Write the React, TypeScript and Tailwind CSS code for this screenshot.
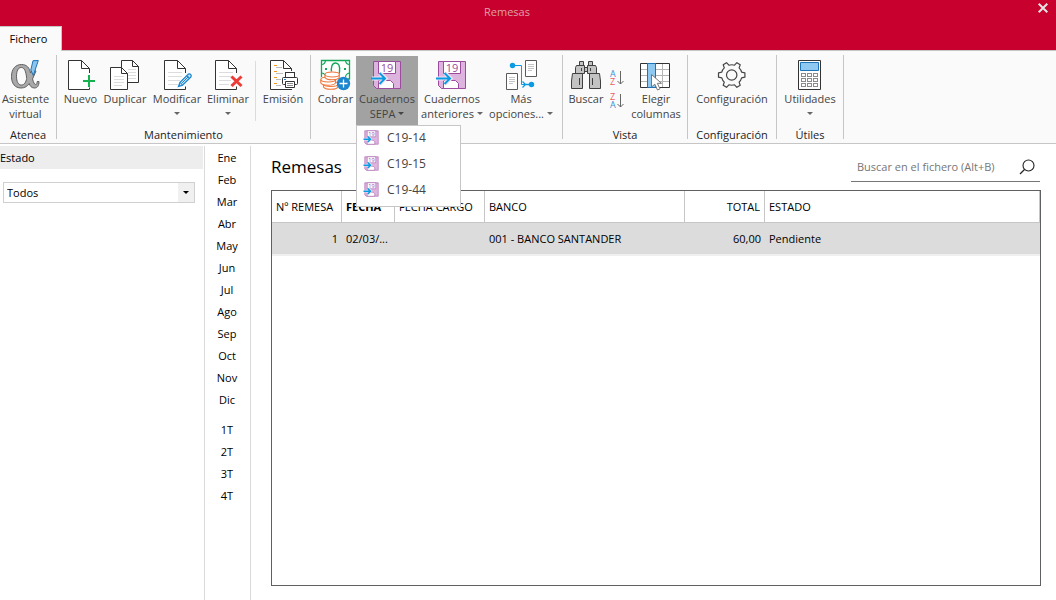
import { useState, type ReactNode } from "react";

const DOC = "#333333";
const BLUE = "#1e88cf";
const SKY = "#0a9be3";
const PURPLE = "#9b4c9e";
const GRAY = "#5a5a5a";

function Icon({ children }: { children: ReactNode }) {
  return (
    <svg viewBox="0 0 32 32" className="block size-8 shrink-0" fill="none" aria-hidden="true">
      {children}
    </svg>
  );
}

function Sheet({ lines = false }: { lines?: boolean }) {
  return (
    <>
      <path d="M24.500 14V9.500L16.500 1.500H3.500V30.500H24.500V27.500" fill="#fff" stroke={DOC} />
      <path d="M16.500 1.500V9.500H24.500" stroke={DOC} />
      {lines && <path d="M7 13.500H21M7 17.500H21M7 21.500H19M7 25.500H17" stroke="#dcdcdc" />}
    </>
  );
}

function AteneaIcon() {
  return (
    <Icon>
      <path
        d="M11.500 5.500C17 5.500 19.500 9 20.500 14L22 10.500L26 12L22.500 20C23.500 23.500 24.500 25.500 25.700 25.500C26.700 25.500 27 24.500 27.200 22.500H29C29 26.500 27.500 29 24.500 29C21.500 29 20 27 19.200 24.500C17.200 27.500 14.500 29 11 29C5 29 1.500 24.500 1.500 17.500C1.500 10 5.500 5.500 11.500 5.500Z"
        fill="#a9a9a9"
        stroke="#606060"
      />
      <path
        d="M11.300 8.500C8 8.500 6.500 12 6.500 17.300C6.500 22.800 8.300 26 11.500 26C14.500 26 16 23 16.700 19.500C16 12.500 14.500 8.500 11.300 8.500Z"
        fill="#fafafa"
        stroke="#606060"
      />
      <path d="M23 1.700L28.300 1.500L23.300 16.500L20.800 11Z" fill="#8cc4ec" stroke="#1f73b7" />
    </Icon>
  );
}

function NewIcon() {
  return (
    <Icon>
      <Sheet />
      <path d="M24 15.500V28.500M17.500 22H30.500" stroke="#fafafa" strokeWidth="4" />
      <path d="M24 16V28M18 22H30" stroke="#16b14f" strokeWidth="2" />
    </Icon>
  );
}

function DuplicateIcon() {
  return (
    <Icon>
      <path d="M12.500 23.500V1.500H23.500L29.500 7.500V23.500Z" fill="#fff" stroke={DOC} />
      <path d="M23.500 1.500V7.500H29.500" stroke={DOC} />
      <path d="M19 10.500H27M19 13.500H27M19 16.500H27M19 19.500H27" stroke="#dcdcdc" />
      <path d="M1.500 30.500V8.500H12.500L18.500 14.500V30.500Z" fill="#fff" stroke={DOC} />
      <path d="M12.500 8.500V14.500H18.500" stroke={DOC} />
      <path d="M5 17.500H15M5 20.500H15M5 23.500H15M5 26.500H13" stroke="#dcdcdc" />
    </Icon>
  );
}

function EditIcon() {
  return (
    <Icon>
      <Sheet lines />
      <path d="M17.500 27.500L19 23.300L27.300 15.200Q28.700 14.500 29.800 15.600Q30.700 16.800 29.800 18L21.500 26.200Z" fill="#cfe6f6" stroke={BLUE} strokeWidth="1.300" />
      <path d="M19 23.300L21.500 26.200M25.800 16.700L28.300 19.300M20.500 24.500L27.500 17.500" stroke={BLUE} />
      <path d="M17.500 27.500L18.300 25.300L19.600 26.600Z" fill={BLUE} />
    </Icon>
  );
}

function DeleteIcon() {
  return (
    <Icon>
      <Sheet lines />
      <path d="M19.500 17.500L29 27M29 17.500L19.500 27" stroke="#fafafa" strokeWidth="5" />
      <path d="M19.500 17.500L29.500 27M29.500 17.500L19.500 27" stroke="#ee3b36" strokeWidth="3" />
    </Icon>
  );
}

function PrintIcon() {
  return (
    <Icon>
      <path d="M24.500 12V9.500L16.500 1.500H3.500V30.500H25" fill="#fff" stroke={DOC} />
      <path d="M16.500 1.500V9.500H24.500" stroke={DOC} />
      <path d="M7 6.500H10M7 12.500H10M7 18.500H10M7 24.500H10" stroke="#f39a1e" />
      <path d="M9 8.500H15M9 14.500H16M9 20.500H14M9 26.500H14" stroke="#bdbdbd" />
      <rect x="18.500" y="13.500" width="9" height="6" fill="#fff" stroke={DOC} />
      <rect x="15.500" y="18.500" width="15" height="7" rx="1" fill="#fff" stroke={DOC} />
      <rect x="17" y="20" width="2" height="1" fill={BLUE} />
      <path d="M18.500 22.500H27.500V28.500H18.500Z" fill="#fff" stroke={DOC} />
      <path d="M20 24.500H26M20 26.500H26" stroke="#8a8a8a" />
    </Icon>
  );
}

function CollectIcon() {
  return (
    <Icon>
      <path d="M1.500 1.500H29.500V20H1.500Z" fill="#fff" stroke="#12a85a" strokeWidth="1.300" />
      <path d="M1.500 5.500Q5 5.500 5.500 1.500M25.500 1.500Q26 5.500 29.500 5.500M1.500 14Q4 14 5 16M29.500 14Q26 14.500 25.500 18" stroke="#12a85a" strokeWidth="1.200" />
      <path d="M5 9H7V11H5ZM24 9H26V11H24Z" fill="#12a85a" />
      <path d="M11.500 14Q10.500 4 15.500 4Q20.500 4 19.500 13Q19.300 15 18 16" stroke="#12a85a" strokeWidth="1.400" />
      <path d="M0 21Q0 17.500 5 17V15Q7 12.500 12 12.500Q19 13 19.500 16V28Q16 32 8 31Q1 30.500 0 28Z" fill="#fafafa" />
      <g fill="#fff" stroke="#f0783c" strokeWidth="1.100">
        <path d="M3.500 25V28C5 31 16.500 31 18 28V25" />
        <ellipse cx="10.800" cy="25" rx="7.300" ry="2.500" />
        <path d="M0.800 20.500V24C2.500 27 13.500 27 15.500 24V20.500" />
        <ellipse cx="8.200" cy="20.500" rx="7.300" ry="2.500" />
        <path d="M5 15.500V18.500C6.500 21.500 17.500 21.500 19.300 18.500V15.500" />
        <ellipse cx="12.200" cy="15.500" rx="7.200" ry="2.500" />
      </g>
      <circle cx="23.500" cy="24.500" r="6.700" fill="#1c86cf" />
      <path d="M23.500 20.500V28.500M19.500 24.500H27.500" stroke="#fff" strokeWidth="1.300" />
    </Icon>
  );
}

function NotebookArt({ arrow = 2 }: { arrow?: number }) {
  return (
    <>
      <path d="M2.500 2.500H29.500V29.500H5.500L2.500 26.500Z" fill="#dcb4de" stroke={PURPLE} />
      <path d="M7.500 2.500H24.500V14.500H7.500Z" fill="#fff" stroke={PURPLE} />
      <path d="M7.500 29.500V21.500H19.500L22.500 24.500V29.500Z" fill="#fff" stroke={PURPLE} />
      <path d="M1 19.500H14M9 14L14.500 19.500L9 25" stroke="#f3e4f4" strokeWidth={arrow + 2} />
      <path d="M0 19.500H13.500M8.500 14L14 19.500L8.500 25" stroke={SKY} strokeWidth={arrow} />
      <text x="16" y="12.500" textAnchor="middle" fontSize="11" fontFamily="Open Sans, sans-serif" fill={PURPLE}>19</text>
    </>
  );
}

function NotebookIcon() {
  return (
    <Icon>
      <NotebookArt />
    </Icon>
  );
}

function MoreIcon() {
  return (
    <Icon>
      <path d="M7.500 6.500H16.500V25.500H20" stroke={SKY} />
      <path d="M17.500 22.500L20.500 25.500L17.500 28.500M20 25.500H26" stroke={SKY} strokeWidth="1.300" />
      <circle cx="7.500" cy="6.500" r="2.700" fill={SKY} />
      <circle cx="26.500" cy="25.500" r="2.700" fill={SKY} />
      <path d="M20.500 1.500H31.500V17.500H20.500ZM1.500 14.500H12.500V30.500H1.500Z" fill="#fff" stroke={GRAY} />
      <path d="M23 5.500H29M23 7.500H29M23 9.500H29M23 11.500H27M4 18.500H10M4 20.500H10M4 22.500H10M4 24.500H8" stroke="#c4c4c4" />
    </Icon>
  );
}

function BinocularsIcon() {
  return (
    <Icon>
      <g fill="#c3c3c3" stroke="#404040">
        <path d="M14.500 8.500H17.500V12.500H14.500Z" />
        <path d="M9.500 2.500H13.500V6.500H9.500ZM18.500 2.500H22.500V6.500H18.500Z" />
        <path d="M6.500 6.500H14.500V14.500H5.500V8.500ZM17.500 6.500H25.500L26.500 8.500V14.500H17.500Z" />
        <path d="M2.500 14.500H12.500V29.500H1.500V22ZM19.500 14.500H29.500L30.500 22V29.500H19.500Z" />
      </g>
      <path d="M9.500 19V26M22.500 19V26M11.500 9V12M20.500 9V12" stroke="#404040" />
    </Icon>
  );
}

function ColumnsIcon() {
  return (
    <Icon>
      <path d="M0.500 4.500H29.500V28.500H0.500Z" fill="#fff" />
      <path d="M1 10.500H29M1 16.500H29M1 22.500H29M22.500 5V28" stroke="#b5b5b5" />
      <path d="M0.500 4.500H29.500V28.500H0.500Z" stroke="#333" />
      <path d="M7.500 4.500H15.500V28.500H7.500Z" fill="#8fc8f0" stroke="#1f73b7" />
      <path d="M11.500 15.500V28L14.800 25.200L17.500 31L20 29.800L17.300 24.300H21.500Z" fill="#fff" stroke="#777" />
    </Icon>
  );
}

function GearIcon() {
  return (
    <Icon>
      <path
        d="M2.500 13.800L5.800 13.200Q6.500 10.500 8.300 8.900L7.200 5.800L10.500 3.700L12.900 6.200Q15.700 5.300 18.500 6.200L20.900 3.700L24.200 5.800L23.100 8.900Q24.900 10.500 25.600 13.200L28.900 13.800V18.200L25.600 18.800Q24.900 21.500 23.100 23.100L24.200 26.200L20.900 28.300L18.500 25.800Q15.700 26.700 12.900 25.800L10.500 28.300L7.200 26.200L8.300 23.100Q6.500 21.500 5.800 18.800L2.500 18.200Z"
        stroke="#444"
        strokeWidth="1.200"
        strokeLinejoin="round"
      />
      <circle cx="15.700" cy="16" r="5.200" stroke="#444" strokeWidth="1.200" />
    </Icon>
  );
}

function CalculatorIcon() {
  return (
    <Icon>
      <path d="M4.500 1.500H26.500V30.500H4.500Z" fill="#fff" stroke="#333" />
      <path d="M6.500 3.500H24.500V11.500H6.500Z" fill="#8fc8f0" stroke="#1f73b7" />
      {[14.5, 19.5, 24.5].map((y) =>
        [7.5, 13.5, 19.5].map((x) => (
          <rect key={`${x}-${y}`} x={x} y={y} width="4" height="3" fill="#fff" stroke="#8a8a8a" />
        )),
      )}
    </Icon>
  );
}

function SortIcon({ top, bottom }: { top: string; bottom: string }) {
  return (
    <svg viewBox="0 0 16 18" className="block h-[18px] w-4 overflow-visible" fill="none" aria-hidden="true">
      <g fontSize="9" fontFamily="Open Sans, sans-serif">
        <text x="1" y="8" fill={top === "A" ? "#3d8fd1" : "#ec5a5f"}>{top}</text>
        <text x="1" y="16" fill={bottom === "A" ? "#3d8fd1" : "#ec5a5f"}>{bottom}</text>
      </g>
      <path d="M11.500 2V15M8.500 12L11.500 15L14.500 12" stroke="#666" />
    </svg>
  );
}

function Caret({ className = "" }: { className?: string }) {
  return (
    <svg viewBox="0 0 6 3" className={`inline-block h-[3px] w-[6px] ${className}`} aria-hidden="true">
      <path d="M0 0H6L3 3Z" fill="currentColor" />
    </svg>
  );
}

type ToolProps = {
  icon: ReactNode;
  label: string;
  second?: string;
  menu?: boolean;
  active?: boolean;
  className: string;
  onClick?: () => void;
};

function Tool({ icon, label, second, menu, active, className, onClick }: ToolProps) {
  return (
    <button
      type="button"
      onClick={onClick}
      aria-haspopup={menu ? "menu" : undefined}
      aria-expanded={menu ? !!active : undefined}
      className={`flex h-[69px] flex-col items-center pt-[3px] leading-[15px] whitespace-nowrap text-[#444] ${active ? "bg-[#a2a2a2]" : ""} ${className}`}
    >
      {icon}
      <span>{label}</span>
      {(second || menu) && (
        <span className="flex h-[15px] items-center gap-[3px]">
          {second}
          {menu && <Caret className={active ? "text-[#444]" : "text-[#666]"} />}
        </span>
      )}
    </button>
  );
}

function Group({ name, className, children }: { name?: string; className: string; children: ReactNode }) {
  return (
    <section className="flex h-[88px] shrink-0" aria-label={name}>
      <div className={`flex flex-col ${className}`}>
        <div className="flex pt-px">{children}</div>
        {name && <h2 className="mt-1 text-center leading-3 text-[#222]">{name}</h2>}
      </div>
      <div className="h-[84px] w-px bg-[#c6c6c6]" />
    </section>
  );
}

const MONTHS = ["Ene", "Feb", "Mar", "Abr", "May", "Jun", "Jul", "Ago", "Sep", "Oct", "Nov", "Dic"];
const QUARTERS = ["1T", "2T", "3T", "4T"];
const FORMATS = ["C19-14", "C19-15", "C19-44"];

function Periods({ items }: { items: string[] }) {
  return (
    <ul>
      {items.map((p) => (
        <li key={p}>
          <button type="button" className="h-[22px] w-full pr-px text-center">{p}</button>
        </li>
      ))}
    </ul>
  );
}

export default function App() {
  const [open, setOpen] = useState(true);
  return (
    <div className="flex min-h-screen flex-col bg-white font-['Open_Sans','Noto_Sans',sans-serif] text-[11px] text-black">
      <header className="bg-[#c8002d]">
        <div className="flex h-[26px]">
          <h1 className="flex-1 text-center leading-6 text-[#dfa0a9]">Remesas</h1>
          <button type="button" aria-label="Cerrar" className="flex w-[42px] justify-end pt-[3px] pr-2">
            <svg viewBox="0 0 10 10" className="size-[10px]" aria-hidden="true">
              <path d="M0.700 0.700L9.300 9.300M9.300 0.700L0.700 9.300" stroke="#e4e4e4" strokeWidth="2" />
            </svg>
          </button>
        </div>
        <nav className="flex h-6">
          <button type="button" className="relative -mb-px h-[25px] w-[62px] border-t border-r border-[#c6c6c6] bg-[#fafafa] pr-1 text-center">
            Fichero
          </button>
        </nav>
      </header>

      <div className="flex h-[94px] border-y border-[#c6c6c6] bg-[#fafafa] pt-1">
        <Group name="Atenea" className="w-14">
          <Tool className="w-[51px]" icon={<AteneaIcon />} label="Asistente" second="virtual" />
        </Group>
        <Group name="Mantenimiento" className="w-[253px]">
          <Tool className="ml-[3px] w-[41px]" icon={<NewIcon />} label="Nuevo" />
          <Tool className="w-12" icon={<DuplicateIcon />} label="Duplicar" />
          <Tool className="w-14" icon={<EditIcon />} label="Modificar" menu />
          <Tool className="w-[46px]" icon={<DeleteIcon />} label="Eliminar" menu />
          <div className="mx-1 mt-[5px] h-[60px] w-px bg-[#dcdcdc]" />
          <Tool className="w-[46px]" icon={<PrintIcon />} label="Emisión" />
        </Group>
        <Group className="w-[251px] pl-1">
          <Tool className="w-[41px]" icon={<CollectIcon />} label="Cobrar" />
          <div className="relative">
            <Tool
              className="w-[62px]"
              icon={<NotebookIcon />}
              label="Cuadernos"
              second="SEPA"
              menu
              active={open}
              onClick={() => setOpen(!open)}
            />
            {open && (
              <ul role="menu" className="absolute top-full left-0 z-10 w-[105px] border border-[#c6c6c6] bg-white pb-[2px]">
                {FORMATS.map((f) => (
                  <li key={f} role="none">
                    <button role="menuitem" type="button" className="flex h-[26px] w-full items-center gap-2 pb-[3px] pl-[7px] text-[12px] text-[#444]">
                      <svg viewBox="1 1 30 30" className="size-[15px] overflow-visible" fill="none" aria-hidden="true">
                        <NotebookArt arrow={3} />
                      </svg>
                      {f}
                    </button>
                  </li>
                ))}
              </ul>
            )}
          </div>
          <Tool className="w-[68px]" icon={<NotebookIcon />} label="Cuadernos" second="anteriores" menu />
          <Tool className="w-[70px]" icon={<MoreIcon />} label="Más" second="opciones..." menu />
        </Group>
        <Group name="Vista" className="w-[124px]">
          <Tool className="ml-1 w-[38px]" icon={<BinocularsIcon />} label="Buscar" />
          <div className="flex w-[23px] flex-col items-center gap-[5px] pt-[13px]">
            <button type="button" aria-label="Orden ascendente"><SortIcon top="A" bottom="Z" /></button>
            <button type="button" aria-label="Orden descendente"><SortIcon top="Z" bottom="A" /></button>
          </div>
          <Tool className="w-[56px]" icon={<ColumnsIcon />} label="Elegir" second="columnas" />
        </Group>
        <Group name="Configuración" className="w-[88px]">
          <Tool className="w-[88px]" icon={<GearIcon />} label="Configuración" />
        </Group>
        <Group name="Útiles" className="w-[66px]">
          <Tool className="w-[66px]" icon={<CalculatorIcon />} label="Utilidades" menu />
        </Group>
      </div>

      <main className="flex flex-1 pt-[2px]">
        <aside className="w-[203px] shrink-0">
          <h2 className="h-[23px] bg-[#ededed] leading-[23px]">
            <label htmlFor="estado">Estado</label>
          </h2>
          <div className="relative mt-[13px] mr-2 ml-[3px]">
            <select id="estado" defaultValue="Todos" className="block h-[21px] w-full appearance-none border border-[#d0d0d0] bg-white pt-[2px] pl-[3px] text-[11px]">
              <option>Todos</option>
            </select>
            <span className="pointer-events-none absolute inset-y-px right-px flex w-4 items-center justify-center bg-[#f0f0f0]">
              <Caret />
            </span>
          </div>
        </aside>
        <nav aria-label="Periodo" className="ml-px flex w-[47px] shrink-0 flex-col gap-2 border-x border-[#dadada] pt-px">
          <Periods items={MONTHS} />
          <Periods items={QUARTERS} />
        </nav>
        <section className="flex min-w-0 flex-1 flex-col pr-[15px] pb-[14px] pl-5">
          <div className="flex h-9 items-end justify-between pr-px">
            <h2 className="pb-[2px] text-[17px] leading-[27px]">Remesas</h2>
            <label className="flex h-[30px] w-[189px] items-center border-b border-[#767676] pr-[5px] pl-[6px]">
              <input type="search" placeholder="Buscar en el fichero (Alt+B)" aria-label="Buscar en el fichero" className="min-w-0 flex-1 pt-[2px] outline-none placeholder:text-[#767676]" />
              <svg viewBox="0 0 16 16" className="size-4 shrink-0" fill="none" aria-hidden="true">
                <circle cx="9.500" cy="6.500" r="5.500" stroke="#222" strokeWidth="1.100" />
                <path d="M5.500 10.500L1 15" stroke="#222" strokeWidth="1.200" />
              </svg>
            </label>
          </div>
          <div className="mt-2 flex-1 border border-[#5f6062]">
            <table className="w-full table-fixed border-separate border-spacing-0 whitespace-nowrap">
              <colgroup>
                <col className="w-[70px]" />
                <col className="w-[53px]" />
                <col className="w-[90px]" />
                <col className="w-[200px]" />
                <col className="w-[80px]" />
                <col />
              </colgroup>
              <thead>
                <tr className="h-8 text-left [&>th]:border-r [&>th]:border-b [&>th]:border-[#c6c6c6] [&>th]:px-1 [&>th]:pt-[2px] [&>th]:pb-0">
                  <th className="font-normal">Nº REMESA</th>
                  <th className="font-bold">FECHA</th>
                  <th className="font-normal">FECHA CARGO</th>
                  <th className="font-normal">BANCO</th>
                  <th className="text-right font-normal">TOTAL</th>
                  <th className="font-normal">ESTADO</th>
                </tr>
              </thead>
              <tbody>
                <tr className="h-[33px] bg-[#dcdcdc] [&>td]:border-b-2 [&>td]:border-[#efefef] [&>td]:px-1 [&>td]:pt-[2px] [&>td]:pb-0">
                  <td className="text-right">1</td>
                  <td>02/03/...</td>
                  <td />
                  <td>001 - BANCO SANTANDER</td>
                  <td className="text-right">60,00</td>
                  <td>Pendiente</td>
                </tr>
              </tbody>
            </table>
          </div>
        </section>
      </main>
    </div>
  );
}
